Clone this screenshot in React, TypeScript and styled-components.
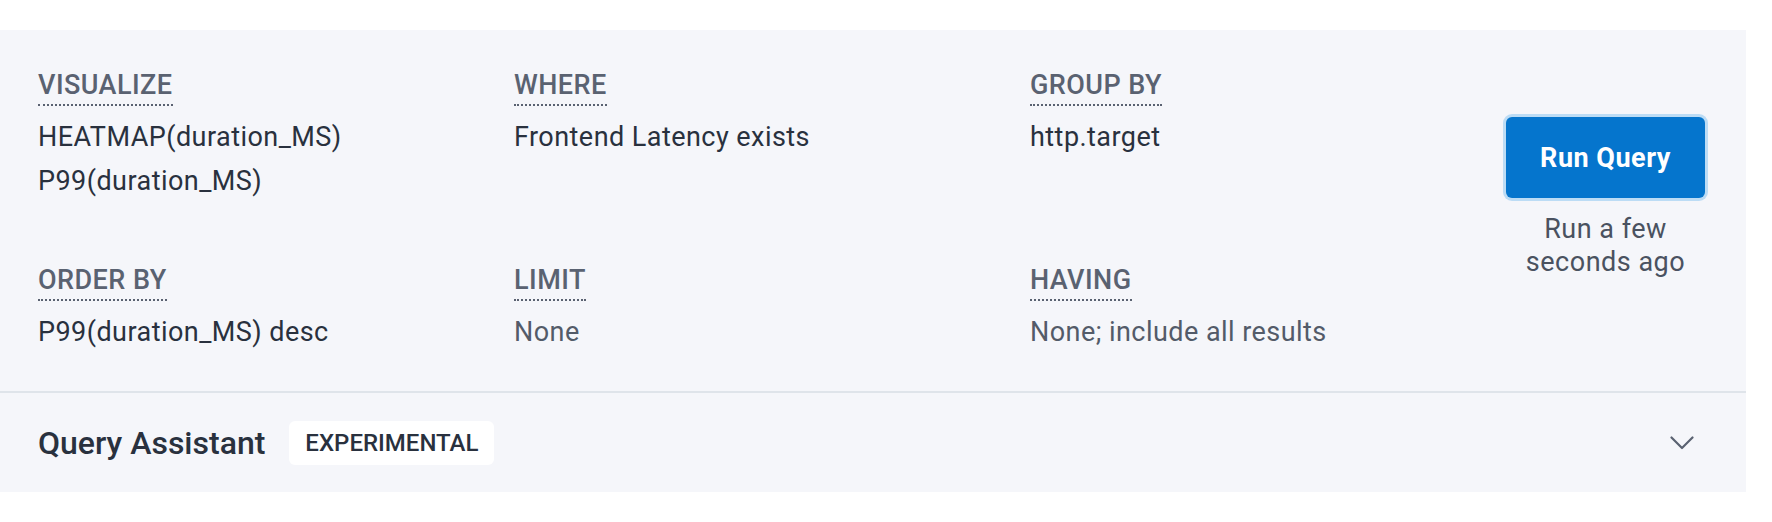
import styled, { createGlobalStyle } from "styled-components";

const GlobalStyle = createGlobalStyle`
  html, body {
    margin: 0;
    padding: 0;
    background: #ffffff;
    font-family: Roboto, "Liberation Sans", sans-serif;
  }
`;

const Page = styled.div`
  padding-top: 30px;
  width: 1746px;
`;

const Panel = styled.section`
  background: #f5f6fa;
`;

const Summary = styled.div`
  display: flex;
  align-items: flex-start;
  padding: 37px 41px 37px 38px;
`;

const Grid = styled.div`
  flex: 1;
  display: grid;
  grid-template-columns: 476px 516px 1fr;
  row-gap: 59px;
`;

const Field = styled.div`
  display: flex;
  flex-direction: column;
  align-items: flex-start;
`;

const Label = styled.span`
  display: inline-block;
  font-size: 27px;
  letter-spacing: 0.45px;
  font-weight: 500;
  line-height: 37px;
  color: #5a6271;
  border-bottom: 2px dotted #5a6271;
  margin-bottom: 9px;
`;

const Value = styled.div<{ $muted?: boolean }>`
  font-size: 27px;
  letter-spacing: 0.45px;
  line-height: 44px;
  color: ${(p) => (p.$muted ? "#535b69" : "#29313e")};
`;

const RunColumn = styled.div`
  width: 199px;
  margin-top: 50px;
  display: flex;
  flex-direction: column;
  align-items: center;
`;

const RunButton = styled.button`
  width: 199px;
  height: 81px;
  border: none;
  border-radius: 6px;
  background: #0575cd;
  box-shadow: 0 0 0 3px #bcdcf5;
  color: #ffffff;
  font-family: Roboto, "Liberation Sans", sans-serif;
  font-size: 27px;
  letter-spacing: 0.5px;
  font-weight: 700;
  cursor: pointer;
`;

const RunNote = styled.div`
  margin-top: 15px;
  font-size: 27px;
  letter-spacing: 0.5px;
  line-height: 33px;
  color: #4a5260;
  text-align: center;
`;

const AssistantBar = styled.div`
  display: flex;
  align-items: center;
  height: 99px;
  padding: 0 52px 0 38px;
  border-top: 2px solid #dfe4ea;
`;

const AssistantTitle = styled.span`
  font-size: 32px;
  font-weight: 500;
  color: #29313e;
`;

const Badge = styled.span`
  margin-left: 24px;
  padding: 0 16px;
  height: 44px;
  display: inline-flex;
  align-items: center;
  background: #ffffff;
  border-radius: 6px;
  font-size: 24px;
  font-weight: 500;
  color: #29313e;
`;

const Chevron = styled.svg`
  margin-left: auto;
  width: 24px;
  height: 14px;
  color: #5a6271;
`;

const fields = [
  { label: "VISUALIZE", values: ["HEATMAP(duration_MS)", "P99(duration_MS)"] },
  { label: "WHERE", values: ["Frontend Latency exists"] },
  { label: "GROUP BY", values: ["http.target"] },
  { label: "ORDER BY", values: ["P99(duration_MS) desc"] },
  { label: "LIMIT", values: ["None"], muted: true },
  { label: "HAVING", values: ["None; include all results"], muted: true },
];

export default function App() {
  return (
    <>
      <GlobalStyle />
      <Page>
        <Panel>
          <Summary>
            <Grid>
              {fields.map((f) => (
                <Field key={f.label}>
                  <Label>{f.label}</Label>
                  {f.values.map((v) => (
                    <Value key={v} $muted={f.muted}>
                      {v}
                    </Value>
                  ))}
                </Field>
              ))}
            </Grid>
            <RunColumn>
              <RunButton>Run Query</RunButton>
              <RunNote>Run a few seconds ago</RunNote>
            </RunColumn>
          </Summary>
          <AssistantBar>
            <AssistantTitle>Query Assistant</AssistantTitle>
            <Badge>EXPERIMENTAL</Badge>
            <Chevron viewBox="0 0 24 14" fill="none">
              <path
                d="M1.5 1.5 L12 12 L22.5 1.5"
                stroke="currentColor"
                strokeWidth="2.2"
                strokeLinecap="round"
                strokeLinejoin="round"
              />
            </Chevron>
          </AssistantBar>
        </Panel>
      </Page>
    </>
  );
}
